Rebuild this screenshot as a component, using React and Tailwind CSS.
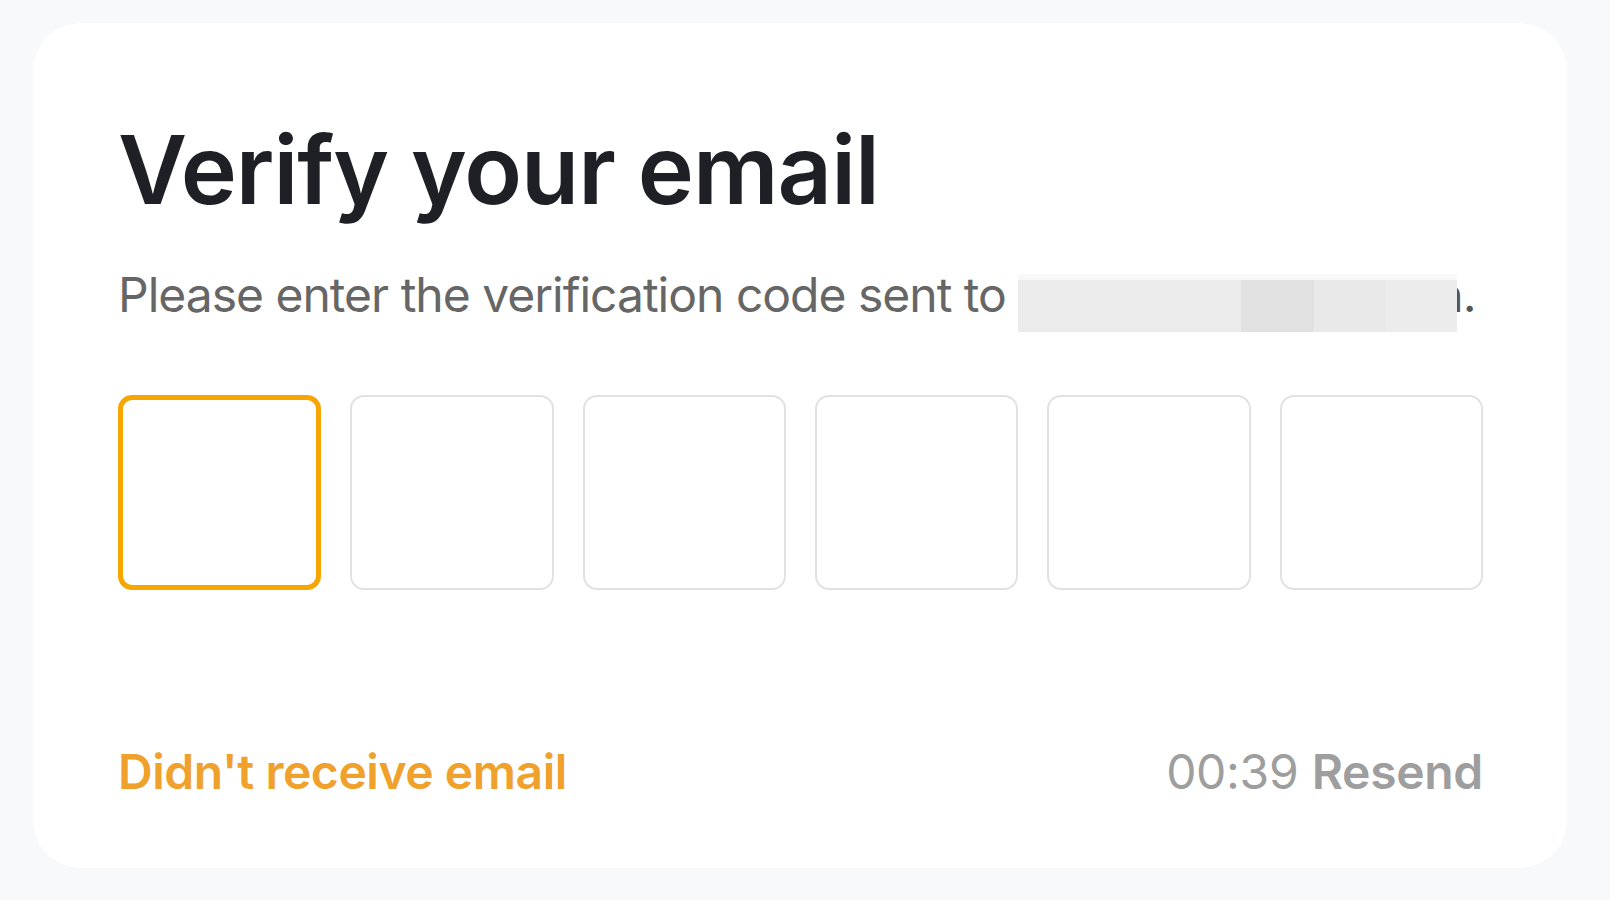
export default function App() {
  const boxes = [0, 1, 2, 3, 4, 5];
  return (
    <div className="w-[1610px] h-[900px] bg-[#f8f9fb] pt-[23px] pl-[33px] pr-[43px] pb-[32px]" style={{ fontFamily: 'Inter, "Noto Sans", sans-serif' }}>
      <div className="h-[845px] w-full bg-white rounded-[48px] pl-[85px] pr-[84px] pt-[99px] flex flex-col">
        <h1 className="text-[95px] leading-[95px] font-semibold text-[#1e2026] tracking-[-1px]">Verify your email</h1>

        <div className="mt-[54px] flex items-start text-[48px] leading-[48px] text-[#666666] whitespace-nowrap tracking-[-1px]">
          <span>Please enter the verification code sent to&nbsp;</span>
          <span className="relative z-10 mt-[3px] flex h-[58px] w-[439px] flex-col">
            <span className="h-[6px] bg-[#f8f8f8]" />
            <span className="flex flex-1">
              <span className="w-[223px] bg-[#ebebeb]" />
              <span className="w-[73px] bg-[#e1e1e1]" />
              <span className="w-[72px] bg-[#e9e9e9]" />
              <span className="flex-1 bg-[#ececec]" />
            </span>
          </span>
          <span className="-ml-[22px] text-[#555]">n.</span>
        </div>

        <div className="mt-[63px] grid grid-cols-6 gap-[29px]">
          {boxes.map((i) => (
            <div
              key={i}
              className={
                i === 0
                  ? 'h-[195px] rounded-[14px] border-[5px] border-[#f7a600] bg-white'
                  : 'h-[195px] rounded-[14px] border-2 border-[#e2e2e2] bg-white'
              }
            />
          ))}
        </div>

        <div className="mt-[158px] flex items-start justify-between text-[48px] leading-[48px]">
          <span className="font-semibold text-[#f0a12c] tracking-[-0.45px]">Didn't receive email</span>
          <span className="text-[#9e9e9e] tracking-[-0.3px]">
            00:39 <span className="font-semibold">Resend</span>
          </span>
        </div>
      </div>
    </div>
  );
}
